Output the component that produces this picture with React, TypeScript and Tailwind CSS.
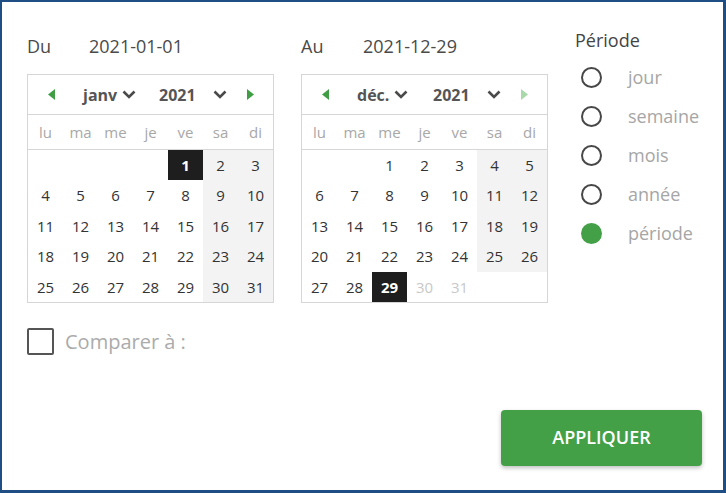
import React from 'react';

const DAY_NAMES = ['lu', 'ma', 'me', 'je', 've', 'sa', 'di'];

interface CalProps {
  month: string;
  year: number;
  offset: number;
  days: number;
  selected: number;
  maxDay?: number;
  nextDisabled?: boolean;
}

function Triangle({ dir, disabled }: { dir: 'left' | 'right'; disabled?: boolean }) {
  return (
    <svg width="7" height="11" viewBox="0 0 7 11" className={disabled ? 'fill-[#a9d8ab]' : 'fill-[#3f9e44]'}>
      {dir === 'left' ? <polygon points="7,0 7,11 0,5.5" /> : <polygon points="0,0 0,11 7,5.5" />}
    </svg>
  );
}

function Chevron() {
  return (
    <svg width="14" height="9" viewBox="0 0 14 9" fill="none" stroke="#4a4a4a" strokeWidth="2.6">
      <polyline points="1.5,1.5 7,7 12.5,1.5" />
    </svg>
  );
}

function Calendar({ month, year, offset, days, selected, maxDay, nextDisabled }: CalProps) {
  const cells: (number | null)[] = [];
  for (let i = 0; i < offset; i++) cells.push(null);
  for (let d = 1; d <= days; d++) cells.push(d);
  while (cells.length < 35) cells.push(null);

  return (
    <div className="w-[247px] border border-[#d6d6d6] bg-white">
      <div className="h-[40px] flex items-center border-b border-[#d6d6d6] text-[16px] font-bold text-[#555]">
        <div className="w-[46px] flex justify-center">
          <Triangle dir="left" />
        </div>
        <div className="ml-[9px] w-[76px] flex items-center gap-[5px]">
          <span>{month}</span>
          <Chevron />
        </div>
        <div className="w-[68px] flex items-center justify-between">
          <span>{year}</span>
          <Chevron />
        </div>
        <div className="w-[46px] flex justify-center">
          <Triangle dir="right" disabled={nextDisabled} />
        </div>
      </div>
      <div className="grid grid-cols-7 h-[35px] items-center border-b border-[#d6d6d6] text-[15px] text-[#a8a8a8]">
        {DAY_NAMES.map((n) => (
          <div key={n} className="text-center">{n}</div>
        ))}
      </div>
      <div className="grid grid-cols-7 text-[15px] text-[#333]">
        {cells.map((d, i) => {
          const weekend = i % 7 >= 5;
          const disabled = d !== null && maxDay !== undefined && d > maxDay;
          let cls = 'h-[30.4px] flex items-center justify-center';
          if (d === selected) cls += ' bg-[#1e1e1e] text-white font-bold';
          else if (disabled) cls += ' text-[#c8c8c8]';
          else if (d !== null && weekend) cls += ' bg-[#f3f3f3]';
          return (
            <div key={i} className={cls}>
              {d}
            </div>
          );
        })}
      </div>
    </div>
  );
}

function DateColumn({ label, date, children }: { label: string; date: string; children: React.ReactNode }) {
  return (
    <div className="flex flex-col">
      <div className="flex h-[24px] items-center text-[18px] text-[#4a4a4a] leading-[24px]">
        <span className="w-[62px]">{label}</span>
        <span>{date}</span>
      </div>
      <div className="mt-[16px]">{children}</div>
    </div>
  );
}

const PERIODS = ['jour', 'semaine', 'mois', 'année', 'période'];

export default function App() {
  return (
    <div className="w-[726px] h-[493px] bg-white border-t-2 border-l-2 border-r-[3px] border-b-[3px] border-[#1f4e85] flex flex-col pl-[25px] pt-[32px] font-['Open_Sans',sans-serif]">
      <div className="flex">
        <DateColumn label="Du" date="2021-01-01">
          <Calendar month="janv" year={2021} offset={4} days={31} selected={1} />
        </DateColumn>
        <div className="ml-[27px]">
          <DateColumn label="Au" date="2021-12-29">
            <Calendar month="déc." year={2021} offset={2} days={31} selected={29} maxDay={29} nextDisabled />
          </DateColumn>
        </div>
        <div className="ml-[27px] -mt-[6px] flex flex-col">
          <div className="text-[18px] leading-[24px] text-[#444]">Période</div>
          <div className="mt-[6px] flex flex-col">
            {PERIODS.map((p, i) => (
              <label key={p} className="h-[39px] flex items-center pl-[6px]">
                {i === 4 ? (
                  <span className="w-[21px] h-[21px] rounded-full bg-[#43a047]" />
                ) : (
                  <span className="w-[21px] h-[21px] rounded-full border-2 border-[#474747]" />
                )}
                <span className="ml-[26px] text-[18px] text-[#a6a6a6]">{p}</span>
              </label>
            ))}
          </div>
        </div>
      </div>

      <label className="mt-[24px] flex items-center">
        <span className="w-[27px] h-[27px] border-2 border-[#555] rounded-[2px]" />
        <span className="ml-[11px] text-[20px] text-[#ababab]">Comparer à :</span>
      </label>

      <div className="mt-[53px] flex justify-end pr-[21px]">
        <button className="w-[201px] h-[56px] bg-[#43a047] rounded-[4px] shadow-[0_2px_4px_rgba(0,0,0,0.25)] text-white font-semibold text-[18px]">
          APPLIQUER
        </button>
      </div>
    </div>
  );
}
